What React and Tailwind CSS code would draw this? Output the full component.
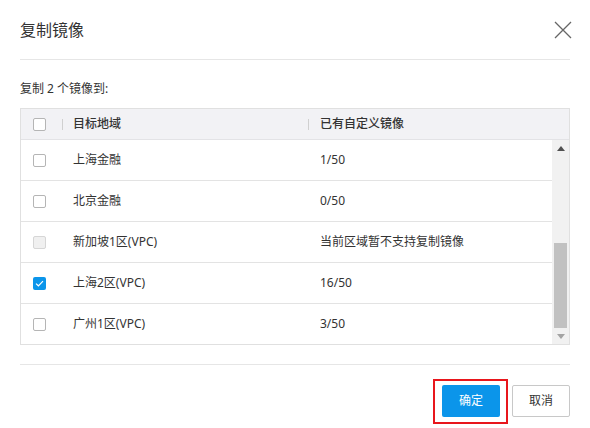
import React from "react";

const rows = [
  { name: "上海金融", count: "1/50", state: "off" },
  { name: "北京金融", count: "0/50", state: "off" },
  { name: "新加坡1区(VPC)", count: "当前区域暂不支持复制镜像", state: "disabled" },
  { name: "上海2区(VPC)", count: "16/50", state: "on" },
  { name: "广州1区(VPC)", count: "3/50", state: "off" },
];

function Checkbox({ state }) {
  if (state === "on") {
    return (
      <span className="w-[13px] h-[13px] rounded-[2px] bg-[#0b95ea] flex items-center justify-center">
        <svg width="9" height="7" viewBox="0 0 9 7">
          <path d="M1 3.6 L3.4 5.8 L8 1.2" fill="none" stroke="#fff" strokeWidth="1.2" />
        </svg>
      </span>
    );
  }
  if (state === "disabled") {
    return <span className="w-[13px] h-[13px] rounded-[2px] border border-[#d6d6d6] bg-[#f0f0f0]" />;
  }
  return <span className="w-[13px] h-[13px] rounded-[2px] border border-[#b5b5b5] bg-white" />;
}

export default function App() {
  return (
    <div className="w-[590px] h-[428px] bg-white text-[#333] font-['Noto_Sans','Noto_Sans_CJK_SC',sans-serif] overflow-hidden">
      {/* Header */}
      <div className="mx-5 h-[60px] flex items-center justify-between border-b border-[#e6e6e6]">
        <h2 className="text-[16px] leading-[20px] text-[#333]">复制镜像</h2>
        <svg width="18" height="18" viewBox="0 0 18 18" className="mr-[-2px]">
          <path d="M1 1 L17 17 M17 1 L1 17" stroke="#666" strokeWidth="1.3" />
        </svg>
      </div>

      <p className="mx-5 mt-[21px] mb-[11px] text-[12px] leading-[16px]">复制 2 个镜像到:</p>

      {/* Table */}
      <div className="mx-5 border border-[#e0e0e0]">
        <div className="h-[31px] bg-[#f2f2f5] border-b border-[#e3e3e6] grid grid-cols-[41px_246px_1fr] items-center text-[12px] font-medium">
          <div className="pl-[12px] flex items-center">
            <Checkbox state="off" />
          </div>
          <div className="flex items-center">
            <span className="w-px h-[11px] bg-[#d0d0d0]" />
            <span className="pl-[10px]">目标地域</span>
          </div>
          <div className="flex items-center">
            <span className="w-px h-[11px] bg-[#d0d0d0]" />
            <span className="pl-[11px]">已有自定义镜像</span>
          </div>
        </div>

        <div className="flex">
          <div className="flex-1">
            {rows.map((r, i) => (
              <div
                key={r.name}
                className={
                  "grid grid-cols-[41px_246px_1fr] items-center text-[12px] " +
                  (i < rows.length - 1 ? "h-[41px] border-b border-[#e3e3e3]" : "h-[40px]")
                }
              >
                <div className="pl-[12px] flex items-center">
                  <Checkbox state={r.state} />
                </div>
                <div className="pl-[11px]">{r.name}</div>
                <div className="pl-[12px]">{r.count}</div>
              </div>
            ))}
          </div>

          {/* scrollbar */}
          <div className="w-[17px] bg-[#f1f1f1] flex flex-col">
            <div className="h-[17px] flex items-center justify-center">
              <svg width="8" height="5" viewBox="0 0 8 5">
                <path d="M0 5 L4 0 L8 5 Z" fill="#505050" />
              </svg>
            </div>
            <div className="flex-1 flex flex-col justify-end items-center">
              <div className="w-[13px] h-[85px] bg-[#c1c1c1]" />
            </div>
            <div className="h-[16px] flex items-center justify-center">
              <svg width="8" height="5" viewBox="0 0 8 5">
                <path d="M0 0 L8 0 L4 5 Z" fill="#a3a3a3" />
              </svg>
            </div>
          </div>
        </div>
      </div>

      {/* Footer */}
      <div className="mx-5 mt-[19px] border-t border-[#e6e6e6] pt-[14px] flex justify-end items-start gap-[4px]">
        <div className="border-2 border-[#e8161c] pl-[7px] pr-[6px] pt-[4px] pb-[5px]">
          <button className="w-[58px] h-[32px] rounded-[2px] bg-[#0b95ea] text-white text-[12px]">确定</button>
        </div>
        <button className="mt-[6px] w-[58px] h-[32px] rounded-[2px] border border-[#c8c8c8] bg-white text-[#333] text-[12px]">
          取消
        </button>
      </div>
    </div>
  );
}
